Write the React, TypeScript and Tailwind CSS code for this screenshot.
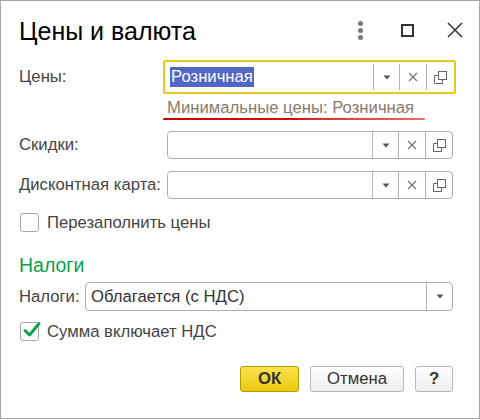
import React from "react";

const font = { fontFamily: '"Liberation Sans", Arial, sans-serif' };

function Arrow() {
  return (
    <svg width="8" height="5" viewBox="0 0 8 5">
      <path d="M0.5 0.5 L7.5 0.5 L4 4.5 Z" fill="#555" />
    </svg>
  );
}
function Clear() {
  return (
    <svg width="10" height="10" viewBox="0 0 10 10">
      <path d="M1 1 L9 9 M9 1 L1 9" stroke="#777" strokeWidth="1.3" />
    </svg>
  );
}
function OpenIcon() {
  return (
    <svg width="13" height="13" viewBox="0 0 13 13">
      <rect x="4.5" y="0.5" width="8" height="8" fill="none" stroke="#666" strokeWidth="1" />
      <path d="M0.5 4.5 L0.5 12.5 L8.5 12.5 L8.5 9" fill="none" stroke="#666" strokeWidth="1" />
      <path d="M0.5 4.5 L4 4.5" stroke="#666" strokeWidth="1" />
    </svg>
  );
}

function FieldButtons({ full = true }: { full?: boolean }) {
  return (
    <>
      <div className="w-[26px] h-full border-l border-[#b5b5b5] flex items-center justify-center">
        <Arrow />
      </div>
      {full && (
        <>
          <div className="w-[27px] h-full border-l border-[#b5b5b5] flex items-center justify-center">
            <Clear />
          </div>
          <div className="w-[27px] h-full border-l border-[#b5b5b5] flex items-center justify-center">
            <OpenIcon />
          </div>
        </>
      )}
    </>
  );
}

function Checkbox({ checked }: { checked?: boolean }) {
  return (
    <div className="relative w-[19px] h-[19px] border border-[#a8a8a8] rounded-[3px] bg-white shrink-0">
      {checked && (
        <svg className="absolute left-[1px] top-[-3px]" width="20" height="20" viewBox="0 0 20 20">
          <path d="M3 10.5 L7.5 15 L17 3.5" fill="none" stroke="#12a04a" strokeWidth="3" strokeLinecap="round" strokeLinejoin="round" />
        </svg>
      )}
    </div>
  );
}

export default function App() {
  return (
    <div className="w-[480px] h-[420px] bg-white" style={font}>
      <div className="w-[480px] h-[419px] border border-[#a6a6a6] bg-white flex flex-col">
        {/* Title bar */}
        <div className="h-[58px] flex items-center pl-[18px] pr-[16px]">
          <div className="text-[25px] text-black flex-1 leading-none pt-[3px]">Цены и валюта</div>
          <div className="flex items-center">
            <div className="flex flex-col gap-[2px] items-center w-[6px] mr-[38px]">
              <div className="w-[5px] h-[5px] rounded-full bg-[#7a7a7a]" />
              <div className="w-[5px] h-[5px] rounded-full bg-[#7a7a7a]" />
              <div className="w-[5px] h-[5px] rounded-full bg-[#7a7a7a]" />
            </div>
            <div className="w-[13px] h-[13px] border-2 border-[#333] mr-[33px]" />
            <svg width="16" height="16" viewBox="0 0 16 16">
              <path d="M1 1 L15 15 M15 1 L1 15" stroke="#333" strokeWidth="1.5" />
            </svg>
          </div>
        </div>

        {/* Цены */}
        <div className="flex items-center h-[34px] pl-[18px] mt-[1px]">
          <div className="w-[144px] text-[16.7px] text-[#444]">Цены:</div>
          <div className="w-[293px] h-[34px] border-2 border-[#f2c61f] rounded-[2px] p-[1px] flex">
            <div className="flex-1 flex items-center h-full pl-[4px]">
              <span className="bg-[#5266c4] text-white text-[16.7px] leading-[20px] px-[1px]">Розничная</span>
            </div>
            <div className="flex items-center h-full py-[1px]">
              <FieldButtons />
            </div>
          </div>
        </div>

        {/* hint */}
        <div className="pl-[166px] mt-[5px] h-[18px] text-[16.7px] leading-[18px] text-[#8a7a68] whitespace-nowrap">
          Минимальные цены: Розничная
        </div>
        <div className="ml-[162px] mt-[1px] w-[262px] h-[2px] rounded-full bg-gradient-to-r from-[#cc0000] via-[#dd0a0a] to-[#ee6a6a]" />

        {/* Скидки */}
        <div className="flex items-center h-[28px] pl-[18px] mt-[11px]">
          <div className="w-[148px] text-[16.7px] text-[#444]">Скидки:</div>
          <div className="w-[286px] h-[28px] border border-[#b0b0b0] rounded-[4px] flex justify-end">
            <FieldButtons />
          </div>
        </div>

        {/* Дисконтная карта */}
        <div className="flex items-center h-[28px] pl-[18px] mt-[12px]">
          <div className="w-[148px] text-[16.7px] text-[#444] whitespace-nowrap">Дисконтная карта:</div>
          <div className="w-[286px] h-[28px] border border-[#b0b0b0] rounded-[4px] flex justify-end">
            <FieldButtons />
          </div>
        </div>

        {/* checkbox */}
        <div className="flex items-center gap-[8px] pl-[19px] mt-[14px] h-[19px]">
          <Checkbox />
          <span className="text-[16.7px] text-[#444]">Перезаполнить цены</span>
        </div>

        {/* Налоги heading */}
        <div className="pl-[18px] mt-[22px] text-[19.5px] leading-[22px] text-[#0aa04c]">Налоги</div>

        {/* Налоги row */}
        <div className="flex items-center h-[29px] pl-[18px] mt-[6px]">
          <div className="w-[66px] text-[16.7px] text-[#444]">Налоги:</div>
          <div className="w-[368px] h-[29px] border border-[#b0b0b0] rounded-[4px] flex items-center">
            <div className="flex-1 pl-[5px] text-[16.7px] text-[#333]">Облагается (с НДС)</div>
            <FieldButtons full={false} />
          </div>
        </div>

        {/* checked */}
        <div className="flex items-center gap-[8px] pl-[19px] mt-[11px] h-[19px]">
          <Checkbox checked />
          <span className="text-[16.7px] text-[#444]">Сумма включает НДС</span>
        </div>

        {/* Buttons */}
        <div className="flex justify-end items-center gap-[11px] pr-[26px] mt-[25px]">
          <div className="w-[59px] h-[26px] rounded-[3px] border border-[#b59c00] bg-gradient-to-b from-[#fbe34a] to-[#ecc800] flex items-center justify-center text-[16.7px] font-bold text-[#333]">
            ОК
          </div>
          <div className="w-[94px] h-[26px] rounded-[3px] border border-[#b8b8b8] bg-gradient-to-b from-white to-[#eeeeee] flex items-center justify-center text-[16.7px] text-[#333]">
            Отмена
          </div>
          <div className="w-[38px] h-[26px] rounded-[3px] border border-[#b8b8b8] bg-gradient-to-b from-white to-[#eeeeee] flex items-center justify-center text-[16.7px] font-bold text-[#333]">
            ?
          </div>
        </div>
      </div>
    </div>
  );
}
